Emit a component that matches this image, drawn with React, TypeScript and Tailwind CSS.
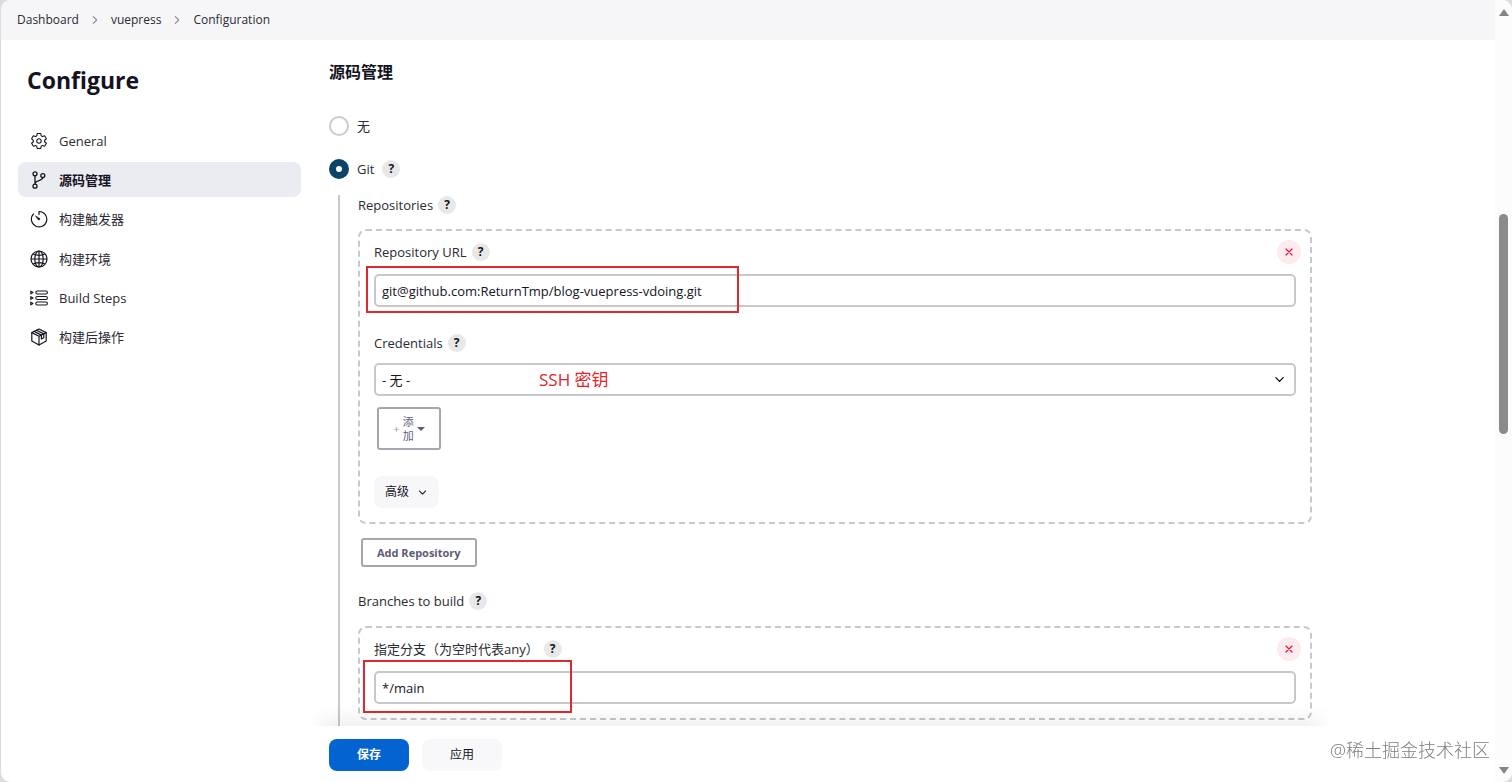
import type { ReactNode } from 'react'
import { IoChevronDown, IoChevronForward, IoSettingsOutline } from 'react-icons/io5'

function BranchIcon() {
  return (
    <svg viewBox="0 0 18 18" className="size-[18px]" fill="none" stroke="currentColor" strokeWidth="1.3" strokeLinecap="round">
      <circle cx="5" cy="2.8" r="2" />
      <circle cx="5" cy="15.2" r="2" />
      <circle cx="12.8" cy="4.6" r="2" />
      <path d="M5 4.8 V13.2 M12.8 6.6 C12.8 10.4 5 8.6 5 13" />
    </svg>
  )
}

function TimerIcon() {
  return (
    <svg viewBox="0 0 18 18" className="size-[18px]" fill="none" stroke="currentColor" strokeWidth="1.2" strokeLinecap="round" strokeLinejoin="round">
      <path d="M9 4.6 V1.5 A7.7 7.7 0 1 1 3.4 4" />
      <path d="M5.6 5.9 L9.8 8.6 A1 1 0 0 1 8.5 9.9 Z" fill="currentColor" strokeWidth="0.6" />
    </svg>
  )
}

function GlobeIcon() {
  return (
    <svg viewBox="0 0 18 18" className="size-[18px]" fill="none" stroke="currentColor" strokeWidth="1.2">
      <circle cx="9" cy="9" r="8" />
      <ellipse cx="9" cy="9" rx="4.2" ry="8" />
      <path d="M9 1 V17 M1 9 H17 M3 4 Q9 6.6 15 4 M3 14 Q9 11.4 15 14" />
    </svg>
  )
}

function StepsIcon() {
  return (
    <svg viewBox="0 0 18 18" className="size-[18px]" fill="none" stroke="currentColor" strokeWidth="1.1" strokeLinejoin="round">
      {[3.5, 9, 14.5].map((y) => (
        <g key={y}>
          <path d={`M0.8 ${y - 1.4} L3 ${y} L0.8 ${y + 1.4} Z`} />
          <rect x="5.8" y={y - 1.5} width="11.6" height="3" rx="1.5" />
        </g>
      ))}
    </svg>
  )
}

function PackageIcon() {
  return (
    <svg viewBox="0 0 18 18" className="size-[18px]" fill="none" stroke="currentColor" strokeWidth="1.2" strokeLinejoin="round" strokeLinecap="round">
      <path d="M9 1 L16.2 4.6 V12.9 L9 17 L1.8 12.9 V4.6 Z" />
      <path d="M1.8 4.6 L9 8.3 L16.2 4.6 M9 8.3 V17" />
      <path d="M6.7 2.2 L13.8 5.9 V9.8 L11.4 11 V7.1 L4.3 3.4" />
    </svg>
  )
}

const navItems = [
  { label: 'General', icon: <IoSettingsOutline className="size-[18px]" /> },
  { label: '源码管理', icon: <BranchIcon />, active: true },
  { label: '构建触发器', icon: <TimerIcon /> },
  { label: '构建环境', icon: <GlobeIcon /> },
  { label: 'Build Steps', icon: <StepsIcon /> },
  { label: '构建后操作', icon: <PackageIcon /> },
]

function Help() {
  return (
    <button type="button" aria-label="Help" className="flex size-[18px] shrink-0 items-center justify-center rounded-full bg-[#e8e8e9] text-[12px] leading-none font-bold text-[#14141f]">
      ?
    </button>
  )
}

function FieldLabel({ id, children }: { id?: string; children: ReactNode }) {
  return (
    <div className="flex h-5 items-center gap-[5px]">
      <label htmlFor={id}>{children}</label>
      <Help />
    </div>
  )
}

function RemoveButton() {
  return (
    <button type="button" aria-label="Remove" className="-mr-[5px] flex size-6 items-center justify-center rounded-full bg-[#fdebee] text-[#e6143c]">
      <svg viewBox="0 0 10 10" className="size-[10px]" stroke="currentColor" strokeWidth="1.2" strokeLinecap="round">
        <path d="M2 2 L8 8 M8 2 L2 8" />
      </svg>
    </button>
  )
}

const control = 'block h-[33px] w-full rounded-[5px] border-2 border-[#c5c9cc] bg-white px-[6px] text-[13px] text-[#14141f] outline-none'

export default function App() {
  return (
    <div className="h-screen bg-[#dcdcde] font-['Open_Sans','Noto_Sans_CJK_SC',sans-serif] text-[13px] leading-5 text-[#2a2a33]">
      <div className="flex h-full overflow-hidden rounded-[10px] border-l border-[#dcdcde] bg-white">
        <div className="flex min-w-0 flex-1 flex-col">
          <nav aria-label="Breadcrumb" className="flex h-10 shrink-0 items-center gap-[10px] bg-[#f6f6f9] px-4 text-[12px]">
            <a href="#dashboard">Dashboard</a>
            <IoChevronForward className="size-3 text-[#8a8a94]" />
            <a href="#vuepress">vuepress</a>
            <IoChevronForward className="size-3 text-[#8a8a94]" />
            <a href="#configuration">Configuration</a>
          </nav>

          <div className="flex min-h-0 flex-1">
            <aside className="w-[300px] shrink-0 pt-6 pl-[17px]">
              <h1 className="pl-[9px] text-[23px] leading-8 font-bold text-[#14141f]">Configure</h1>
              <ul className="mt-[27px] flex h-[232px] flex-col justify-between">
                {navItems.map((item) => (
                  <li key={item.label}>
                    <a
                      href="#section"
                      className={
                        item.active
                          ? 'flex h-[35px] items-center gap-[11px] rounded-lg bg-[#ebebf2] px-3 font-semibold text-[#14141f]'
                          : 'flex h-[35px] items-center gap-[11px] rounded-lg px-3'
                      }
                    >
                      <span className="text-[#14141f]">{item.icon}</span>
                      {item.label}
                    </a>
                  </li>
                ))}
              </ul>
            </aside>

            <main className="flex min-w-0 flex-1 flex-col pr-[183px] pl-7">
              <div className="relative -mx-5 min-h-0 flex-1 overflow-hidden px-5 pt-[22px]">
                <h2 className="text-[16px] font-bold text-[#14141f]">源码管理</h2>

                <div className="mt-[34px] flex h-5 items-center gap-2">
                  <input id="scm-none" type="radio" name="scm" className="size-5 appearance-none rounded-full border-2 border-[#c8ccd0] bg-white" />
                  <label htmlFor="scm-none">无</label>
                </div>
                <div className="mt-[23px] flex h-5 items-center gap-2">
                  <input
                    id="scm-git"
                    type="radio"
                    name="scm"
                    defaultChecked
                    className="size-5 appearance-none rounded-full border-[7px] border-[#0b4466] bg-white"
                  />
                  <label htmlFor="scm-git">Git</label>
                  <Help />
                </div>

                <div className="mt-4 ml-[9px] h-[600px] border-l-2 border-[#c5c8cc] pl-[18px]">
                  <FieldLabel>Repositories</FieldLabel>

                  <div className="mt-[14px] rounded-lg border-2 border-dashed border-[#c5c8cc] px-[14px] pt-[9px] pb-[14px]">
                    <div className="flex items-center justify-between">
                      <FieldLabel id="repo-url">Repository URL</FieldLabel>
                      <RemoveButton />
                    </div>
                    <div className="relative mt-[10px]">
                      <input id="repo-url" defaultValue="git@github.com:ReturnTmp/blog-vuepress-vdoing.git" className={control} />
                      <div className="pointer-events-none absolute -top-2 -left-2 h-[47px] w-[373px] border-2 border-[#dd2a30]" />
                    </div>

                    <div className="mt-[26px]">
                      <FieldLabel id="credentials">Credentials</FieldLabel>
                    </div>
                    <div className="relative mt-[10px]">
                      <select id="credentials" className={control + ' appearance-none'}>
                        <option>- 无 -</option>
                      </select>
                      <IoChevronDown className="pointer-events-none absolute top-[10px] right-[10px] size-[13px] stroke-[20px] text-black" />
                      <span className="pointer-events-none absolute top-[7px] left-[165px] text-[17px] text-[#e0262c]">SSH 密钥</span>
                    </div>

                    <button
                      type="button"
                      className="mt-[11px] ml-[3px] flex h-[43px] w-[64px] items-center justify-center gap-[3px] rounded-[3px] border-2 border-[#a4a7ad] text-[11px] leading-[14px] text-[#5c5c7a]"
                    >
                      <span className="text-[#9a9aa8]">+</span>
                      <span className="w-[11px]">添加</span>
                      <span className="size-0 border-x-[4px] border-t-[4px] border-x-transparent border-t-[#5c5c7a]" />
                    </button>

                    <button type="button" className="mt-[26px] flex h-8 items-center gap-2 rounded-lg bg-[#f7f7f9] px-[11px] text-[12px] text-[#14141f]">
                      高级
                      <IoChevronDown className="size-[11px] stroke-[20px]" />
                    </button>
                  </div>

                  <button type="button" className="mt-[14px] ml-[3px] h-[29px] rounded-[3px] border-2 border-[#a4a7ad] px-[14px] text-[11px] leading-4 font-bold text-[#5c5c7a]">
                    Add Repository
                  </button>

                  <div className="mt-6">
                    <FieldLabel>Branches to build</FieldLabel>
                  </div>

                  <div className="mt-[15px] rounded-lg border-2 border-dashed border-[#c5c8cc] px-[14px] pt-[9px] pb-[14px]">
                    <div className="flex items-center justify-between">
                      <FieldLabel id="branch">指定分支（为空时代表any）</FieldLabel>
                      <RemoveButton />
                    </div>
                    <div className="relative mt-[10px]">
                      <input id="branch" defaultValue="*/main" className={control} />
                      <div className="pointer-events-none absolute -top-[11px] -left-[11px] h-[53px] w-[209px] border-2 border-[#dd2a30]" />
                    </div>
                  </div>
                </div>

                <div className="pointer-events-none absolute inset-x-0 bottom-0 h-5 bg-linear-to-t from-black/5 to-transparent [mask-image:linear-gradient(to_right,transparent,black_24px,black_calc(100%-24px),transparent)]" />
              </div>

              <div className="flex h-14 shrink-0 items-center gap-[13px] pt-px">
                <button type="submit" className="h-8 w-20 rounded-lg bg-[#0263d1] text-[12px] font-bold text-white">
                  保存
                </button>
                <button type="button" className="h-8 w-20 rounded-lg bg-[#f8f8fa] text-[12px] text-[#14141f]">
                  应用
                </button>
              </div>
            </main>
          </div>
        </div>

        <div className="flex w-[17px] shrink-0 flex-col items-center justify-between bg-[#fcfcfc] pt-[9px] pb-2">
          <span className="border-x-[5px] border-b-[7px] border-x-transparent border-b-[#858585]" />
          <span className="mb-[135px] h-[220px] w-[9px] rounded-full bg-[#8b8b8b]" />
          <span className="border-x-[5px] border-t-[7px] border-x-transparent border-t-[#858585]" />
        </div>
      </div>

      <p className="pointer-events-none fixed right-[22px] bottom-5 text-[18px] leading-6 font-light text-[#7d7d7d]">@稀土掘金技术社区</p>
    </div>
  )
}
